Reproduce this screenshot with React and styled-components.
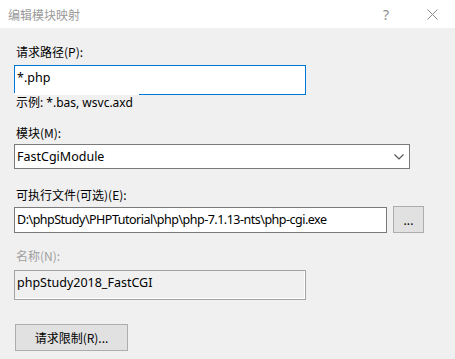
import React from "react";
import styled, { createGlobalStyle } from "styled-components";

const Global = createGlobalStyle`
  html, body {
    margin: 0;
    padding: 0;
    background: #f0f0f0;
  }
  body {
    font-family: "Noto Sans", "Noto Sans CJK SC", sans-serif;
    font-size: 12px;
    color: #000;
  }
`;

const Dialog = styled.div`
  width: 455px;
  height: 359px;
  background: #f0f0f0;
  overflow: hidden;
`;

const TitleBar = styled.div`
  height: 28px;
  background: #fff;
  display: flex;
  align-items: center;
  padding-left: 8px;
`;

const Title = styled.div`
  flex: 1;
  color: #9a9a9a;
  font-size: 12px;
  font-family: "Noto Sans CJK SC", sans-serif;
`;

const TitleButton = styled.div`
  width: 46px;
  height: 28px;
  display: flex;
  align-items: center;
  justify-content: center;
  color: #8c8c8c;
  font-size: 14px;
`;

const Body = styled.div`
  padding: 16px 0 0 14px;
  display: flex;
  flex-direction: column;
`;

const Label = styled.div`
  font-family: "Noto Sans CJK SC", sans-serif;
  line-height: 16px;
  height: 16px;
  padding-left: 2px;
  margin-top: ${p => p.$top || 0}px;
  margin-bottom: ${p => p.$bottom || 0}px;
  color: ${p => (p.$disabled ? "#a0a0a0" : "#000")};
`;

const TextBox = styled.div`
  box-sizing: border-box;
  width: ${p => p.$w}px;
  height: ${p => p.$h}px;
  border: 1px solid ${p => (p.$focus ? "#0078d7" : p.$disabled ? "#a3a3a3" : "#7a7a7a")};
  background: ${p => (p.$disabled ? "#f0f0f0" : "#fff")};
  box-shadow: ${p => (p.$disabled ? "inset -1px -1px 0 #fff" : "none")};
  padding: ${p => p.$padTop || 4}px 0 0 2px;
  font-size: 12.5px;
  line-height: 16px;
  letter-spacing: ${p => (p.$tight ? "-0.5px" : "0")};
  white-space: nowrap;
  overflow: hidden;
`;

const Hint = styled.div`
  position: relative;
  width: fit-content;
  margin-top: -2px;
  border-top: 2px solid #fff;
  padding: 0 6px 0 2px;
  line-height: 16px;
  font-family: "Noto Sans", "Noto Sans CJK SC", sans-serif;
`;

const Select = styled(TextBox)`
  display: flex;
  align-items: center;
  padding: 0 0 0 2px;
`;

const SelectText = styled.span`
  flex: 1;
`;

const Chevron = styled.svg`
  width: 10px;
  height: 6px;
  margin-right: 5px;
`;

const Row = styled.div`
  display: flex;
  align-items: center;
  gap: 6px;
`;

const Button = styled.div`
  box-sizing: border-box;
  width: ${p => p.$w}px;
  height: 27px;
  background: #e1e1e1;
  border: 1px solid #adadad;
  display: flex;
  align-items: center;
  justify-content: center;
  font-family: "Noto Sans CJK SC", sans-serif;
  font-size: 12px;
  margin-left: ${p => p.$left || 0}px;
  margin-top: ${p => p.$top || 0}px;
`;

export default function App() {
  return (
    <>
      <Global />
      <Dialog>
        <TitleBar>
          <Title>编辑模块映射</Title>
          <TitleButton>?</TitleButton>
          <TitleButton>
            <svg width="11" height="11" viewBox="0 0 11 11">
              <path d="M0.5 0.5 L10.5 10.5 M10.5 0.5 L0.5 10.5" stroke="#8c8c8c" strokeWidth="1" fill="none" />
            </svg>
          </TitleButton>
        </TitleBar>
        <Body>
          <Label $bottom={5}>请求路径(P):</Label>
          <TextBox $w={292} $h={30} $focus>*.php</TextBox>
          <Hint>示例: *.bas, wsvc.axd</Hint>
          <Label $top={14} $bottom={3}>模块(M):</Label>
          <Select $w={396} $h={25}>
            <SelectText>FastCgiModule</SelectText>
            <Chevron viewBox="0 0 10 6">
              <path d="M0.5 0.5 L5 5 L9.5 0.5" stroke="#555" strokeWidth="1.2" fill="none" />
            </Chevron>
          </Select>
          <Label $top={18} $bottom={3}>可执行文件(可选)(E):</Label>
          <Row>
            <TextBox $w={373} $h={26} $padTop={4} $tight>
              D:\phpStudy\PHPTutorial\php\php-7.1.13-nts\php-cgi.exe
            </TextBox>
            <Button $w={31}>...</Button>
          </Row>
          <Label $top={15} $bottom={6} $disabled>名称(N):</Label>
          <TextBox $w={292} $h={30} $disabled>phpStudy2018_FastCGI</TextBox>
          <Button $w={113} $left={1} $top={24}>请求限制(R)...</Button>
        </Body>
      </Dialog>
    </>
  );
}
